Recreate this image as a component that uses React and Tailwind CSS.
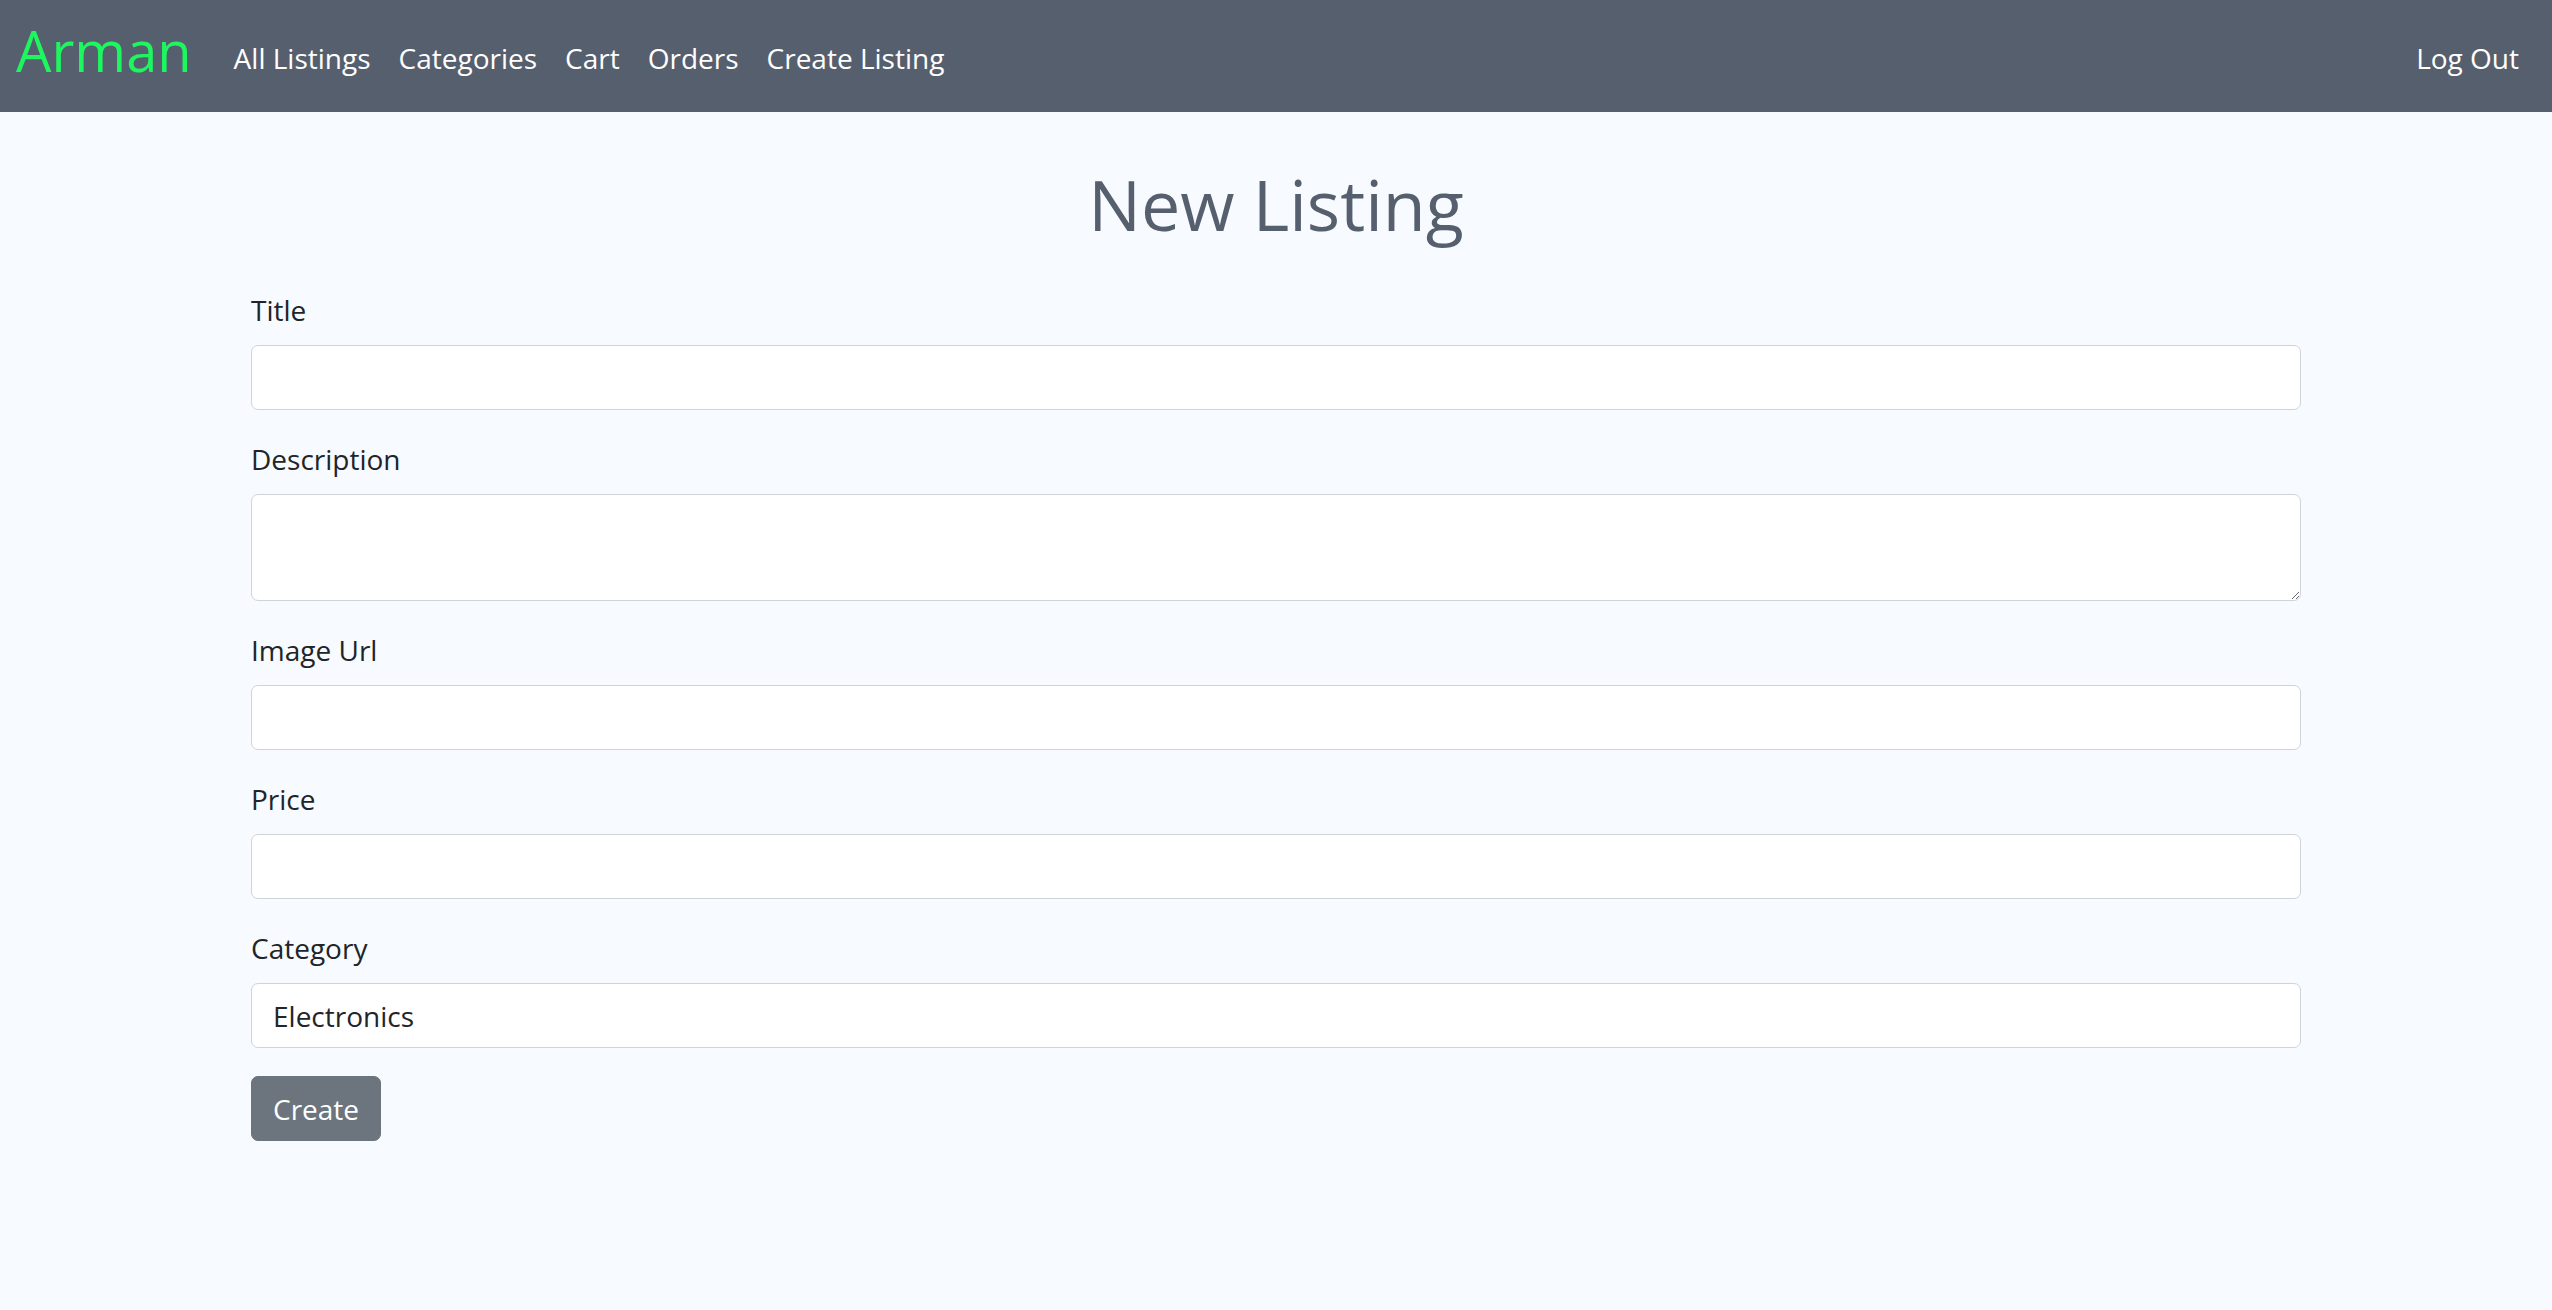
import React from "react";

const links = ["All Listings", "Categories", "Cart", "Orders", "Create Listing"];

function Field({ label, children }) {
  return (
    <div className="mb-[28px]">
      <label className="block text-[28px] leading-[42px] mb-[14px] text-[#212529]">{label}</label>
      {children}
    </div>
  );
}

const inputCls =
  "block w-full h-[65px] border border-[#ced4da] rounded-[7px] bg-white px-[21px] text-[28px] leading-[42px] text-[#212529] outline-none";

export default function App() {
  return (
    <div className="min-h-screen bg-[#f7fafe] font-['Open_Sans',sans-serif] text-[#212529]">
      <nav className="h-[112px] bg-[#565f6e] flex items-center pl-[16px] pr-[19px]">
        <a href="#" className="block text-[56px] leading-[84px] text-[#1ef65f] pb-[12px] mr-[28px]">
          Arman
        </a>
        <ul className="flex items-center pt-[4px]">
          {links.map((l) => (
            <li key={l}>
              <a href="#" className="block px-[14px] text-[28px] leading-[42px] text-white">
                {l}
              </a>
            </li>
          ))}
        </ul>
        <div className="ml-auto pt-[4px]">
          <a href="#" className="block px-[14px] text-[28px] leading-[42px] text-white">
            Log Out
          </a>
        </div>
      </nav>

      <main className="w-[2050px] mx-auto">
        <h1 className="mt-[50px] mb-[43px] text-center text-[70px] leading-[1.2] font-normal text-[#565f6e]">
          New Listing
        </h1>
        <form onSubmit={(e) => e.preventDefault()}>
          <Field label="Title">
            <input type="text" className={inputCls} />
          </Field>
          <Field label="Description">
            <textarea
              rows={2}
              className="block w-full h-[107px] border border-[#ced4da] rounded-[7px] bg-white px-[21px] py-[10px] text-[28px] leading-[42px] text-[#212529] outline-none resize-y"
            />
          </Field>
          <Field label="Image Url">
            <input type="text" className={inputCls} />
          </Field>
          <Field label="Price">
            <input type="text" className={inputCls} />
          </Field>
          <div>
            <label className="block text-[28px] leading-[42px] mb-[14px] text-[#212529]">Category</label>
            <select className={inputCls + " appearance-none"} defaultValue="Electronics">
              <option>Electronics</option>
              <option>Clothing</option>
              <option>Books</option>
            </select>
          </div>
          <button
            type="submit"
            className="mt-[28px] h-[65px] px-[21px] bg-[#6c757d] border border-[#6c757d] text-white rounded-[7px] text-[28px] leading-[42px]"
          >
            Create
          </button>
        </form>
      </main>
    </div>
  );
}
